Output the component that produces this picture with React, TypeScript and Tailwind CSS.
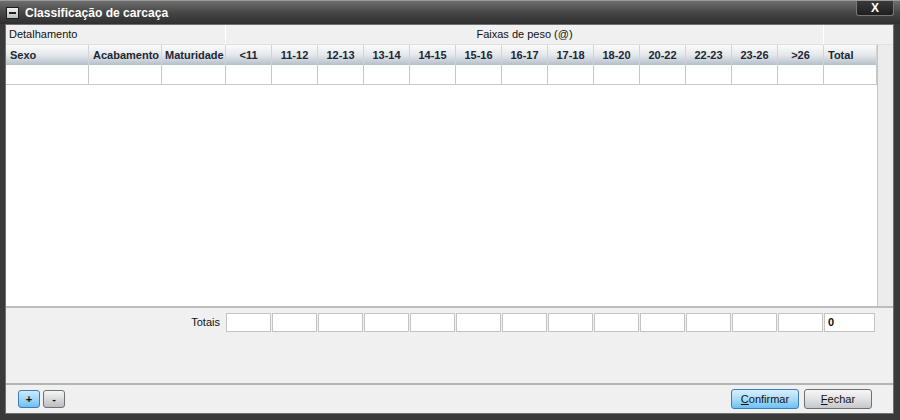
import React from "react";

const weights = ["<11", "11-12", "12-13", "13-14", "14-15", "15-16", "16-17", "17-18", "18-20", "20-22", "22-23", "23-26", ">26"];
const cols = "grid-cols-[83px_73px_64px_repeat(13,46px)_53px_16px]";

const hdr =
  "h-[20px] flex items-center border-r border-[#d4d4d4] bg-gradient-to-b from-[#fbfbfb] via-[#e4e8ec] to-[#b5bfc8] text-[11px] font-bold text-[#1c2633]";

export default function App() {
  return (
    <div className="w-[900px] h-[420px] bg-[#3a3a3a] flex flex-col overflow-hidden" style={{ fontFamily: '"Liberation Sans", Arial, sans-serif' }}>
      {/* title bar */}
      <div className="relative h-[24px] shrink-0 flex items-center bg-gradient-to-b from-[#6e6e6e] via-[#474747] to-[#2f2f2f] border-t border-[#9a9a9a]">
        <div className="ml-[6px] w-[13px] h-[12px] bg-gradient-to-b from-[#f0f0f0] to-[#bdbdbd] border border-[#1e1e1e] flex items-center justify-center">
          <div className="w-[7px] h-[2px] bg-[#202020]" />
        </div>
        <span className="ml-[6px] text-[13px] font-bold text-white scale-x-[0.93] origin-left inline-block">Classificação de carcaça</span>
        <div className="absolute right-[6px] top-0 w-[38px] h-[15px] bg-gradient-to-b from-[#3a3a3a] to-[#1f1f1f] border border-[#777] border-t-0 rounded-b-[3px] flex items-center justify-center">
          <span className="text-white text-[12px] font-bold leading-none">X</span>
        </div>
      </div>

      {/* body */}
      <div className="flex-1 ml-[5px] mr-[6px] mb-[6px] border border-[#707070] bg-[#f0f0f0] flex flex-col">
        <div className={`grid ${cols}`}>
          {/* group row */}
          <div className="col-span-3 h-[20px] flex items-center pl-[3px] text-[11px] text-[#111] border-r border-[#ffffff] border-b border-b-[#e0e0e0]">Detalhamento</div>
          <div className="col-span-13 h-[20px] flex items-center justify-center text-[11px] text-[#111] border-r border-[#ffffff] border-b border-b-[#e0e0e0]">Faixas de peso (@)</div>
          <div className="col-span-2 h-[20px] border-b border-[#e0e0e0]" />
        </div>
        <div className="flex-1 flex bg-white">
          <div className="flex-1 flex flex-col">
            <div className={`grid grid-cols-[83px_73px_64px_repeat(13,46px)_53px]`}>
              <div className={`${hdr} pl-[4px]`}>Sexo</div>
              <div className={`${hdr} pl-[4px]`}>Acabamento</div>
              <div className={`${hdr} pl-[3px]`}>Maturidade</div>
              {weights.map((w) => (
                <div key={w} className={`${hdr} justify-center`}>{w}</div>
              ))}
              <div className={`${hdr} pl-[4px]`}>Total</div>
              {Array.from({ length: 17 }).map((_, i) => (
                <div key={i} className="h-[20px] bg-white border-r border-b border-[#c8c8c8]" />
              ))}
            </div>
          </div>
          <div className="w-[16px] bg-[#ececec] border-l border-[#c4c4c4]" />
        </div>
        {/* totals */}
        <div className="h-[77px] shrink-0 border-t-2 border-[#bdbdbd] bg-[#f0f0f0]">
          <div className="grid grid-cols-[220px_repeat(13,46px)_53px] mt-[5px]">
            <div className="h-[19px] flex items-center justify-end pr-[6px] text-[11px] text-[#111]">Totais</div>
            {weights.map((w) => (
              <div key={w} className="h-[19px] mr-[1px] bg-white border border-[#c4c4c4]" />
            ))}
            <div className="h-[19px] mr-[2px] bg-white border border-[#c4c4c4] flex items-center pl-[3px] text-[11px] font-bold text-[#111]">0</div>
          </div>
        </div>
        {/* buttons */}
        <div className="h-[30px] shrink-0 border-t-2 border-[#b4b4b4] flex items-center pl-[12px] pr-[21px]">
          <button className="w-[22px] h-[18px] rounded-[3px] border border-[#3a7cc0] bg-gradient-to-b from-[#cfeafc] to-[#6cc0f2] text-[11px] font-bold text-[#111] flex items-center justify-center leading-none">+</button>
          <button className="ml-[3px] w-[22px] h-[18px] rounded-[3px] border border-[#707070] bg-gradient-to-b from-[#f6f6f6] to-[#b9bec2] text-[11px] font-bold text-[#111] flex items-center justify-center leading-none">-</button>
          <div className="flex-1" />
          <button className="w-[68px] h-[20px] rounded-[3px] border border-[#3a7cc0] bg-gradient-to-b from-[#d8effd] via-[#a9dcf8] to-[#6cc0f2] text-[11px] text-[#111] flex items-center justify-center">
            <span><u>C</u>onfirmar</span>
          </button>
          <button className="ml-[5px] w-[68px] h-[20px] rounded-[3px] border border-[#707070] bg-gradient-to-b from-[#f6f6f6] via-[#e2e2e2] to-[#c4c8cb] text-[11px] text-[#111] flex items-center justify-center">
            <span><u>F</u>echar</span>
          </button>
        </div>
      </div>
    </div>
  );
}
